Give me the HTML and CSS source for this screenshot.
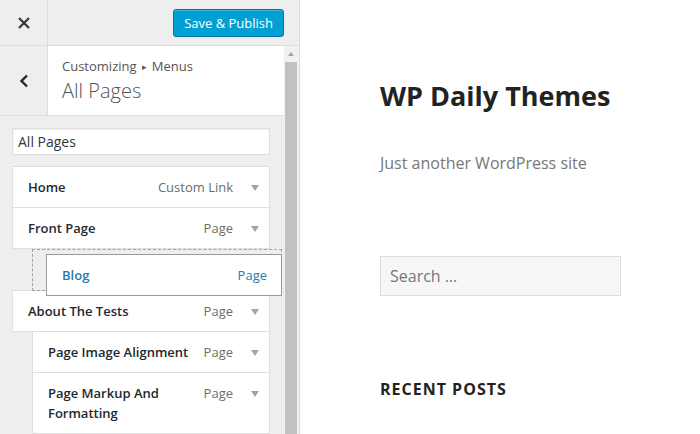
FILE: index.html
```html
<!DOCTYPE html>
<html lang="en">
<head>
    <meta charset="UTF-8">
    <title>Customize: WP Daily Themes</title>
    <link rel="stylesheet" href="styles.css">
</head>
<body>
<div class="customizer">
    <!-- Customizer sidebar -->
    <aside class="sidebar">
        <div class="sidebar-top">
            <a class="close-btn" href="#">
                <svg width="20" height="20" viewBox="0 0 20 20"><path d="M5 5 L15 15 M15 5 L5 15" stroke="#32373c" stroke-width="2.2" fill="none"/></svg>
            </a>
            <button class="publish-btn">Save &amp; Publish</button>
        </div>
        <div class="sidebar-body">
            <div class="sidebar-content">
                <div class="panel-head">
                    <a class="back-btn" href="#">
                        <svg width="20" height="20" viewBox="0 0 20 20"><path d="M13 4.5 L7.5 10 L13 15.5" stroke="#23282d" stroke-width="2.4" fill="none"/></svg>
                    </a>
                    <div class="panel-title">
                        <span class="crumb">Customizing <span class="sep">&#9656;</span> Menus</span>
                        <span class="title">All Pages</span>
                    </div>
                </div>

                <div class="menu-area">
                    <input class="menu-name" type="text" value="All Pages">
                    <ul class="menu-items">
                        <li class="menu-item">
                            <span class="item-title">Home</span>
                            <span class="item-type">Custom Link</span>
                            <span class="toggle"></span>
                        </li>
                        <li class="menu-item">
                            <span class="item-title">Front Page</span>
                            <span class="item-type">Page</span>
                            <span class="toggle"></span>
                        </li>
                        <li class="drop-placeholder">
                            <div class="menu-item dragging">
                                <span class="item-title">Blog</span>
                                <span class="item-type">Page</span>
                            </div>
                        </li>
                        <li class="menu-item after-drop">
                            <span class="item-title">About The Tests</span>
                            <span class="item-type">Page</span>
                            <span class="toggle"></span>
                        </li>
                        <li class="menu-item depth-1">
                            <span class="item-title">Page Image Alignment</span>
                            <span class="item-type">Page</span>
                            <span class="toggle"></span>
                        </li>
                        <li class="menu-item depth-1">
                            <span class="item-title">Page Markup And Formatting</span>
                            <span class="item-type">Page</span>
                            <span class="toggle"></span>
                        </li>
                    </ul>
                </div>
            </div>
            <div class="scrollbar">
                <span class="scroll-up"></span>
                <span class="scroll-thumb"></span>
            </div>
        </div>
    </aside>

    <!-- Site preview -->
    <main class="preview">
        <h1 class="site-title">WP Daily Themes</h1>
        <p class="site-desc">Just another WordPress site</p>
        <input class="search-field" type="search" placeholder="Search &hellip;">
        <h2 class="widget-title">Recent Posts</h2>
    </main>
</div>
</body>
</html>
```

FILE: styles.css
```css
/* Basic styling */
html, body {
    margin: 0;
    padding: 0;
    height: 100%;
    overflow: hidden;
}
body {
    font-family: 'Open Sans', 'Noto Sans', sans-serif;
    font-size: 13px;
    color: #444;
    background-color: #fff;
}
.customizer {
    display: flex;
    height: 100vh;
}

/* Sidebar */
.sidebar {
    width: 300px;
    flex-shrink: 0;
    box-sizing: border-box;
    border-right: 1px solid #ddd;
    background-color: #eee;
    display: flex;
    flex-direction: column;
}
.sidebar-top {
    height: 45px;
    border-bottom: 1px solid #ddd;
    display: flex;
    align-items: center;
    justify-content: space-between;
}
.close-btn {
    width: 47px;
    height: 45px;
    border-right: 1px solid #ddd;
    display: flex;
    align-items: center;
    justify-content: center;
}
.publish-btn {
    margin-right: 15px;
    margin-top: 1px;
    height: 28px;
    padding: 0 10px;
    font-family: inherit;
    font-size: 13px;
    color: #fff;
    background-color: #00a0d2;
    border: 1px solid #0073aa;
    border-radius: 3px;
    box-shadow: inset 0 1px 0 rgba(120, 200, 230, 0.5);
    cursor: pointer;
}
.sidebar-body {
    flex: 1;
    display: flex;
    overflow: hidden;
}
.sidebar-content {
    flex: 1;
    overflow: hidden;
}

/* Panel header */
.panel-head {
    display: flex;
    background-color: #fff;
    border-bottom: 1px solid #ddd;
}
.back-btn {
    width: 47px;
    flex-shrink: 0;
    border-right: 1px solid #ddd;
    background-color: #eee;
    display: flex;
    align-items: center;
    justify-content: center;
}
.panel-title {
    padding: 10px 12px 11px 14px;
    display: flex;
    flex-direction: column;
}
.crumb {
    font-size: 13px;
    line-height: 20px;
    color: #555;
}
.crumb .sep {
    font-size: 9px;
    font-family: 'DejaVu Sans', sans-serif;
    vertical-align: 1px;
    padding: 0 2px;
}
.title {
    font-size: 20px;
    font-weight: 300;
    line-height: 27px;
    color: #555;
}

/* Menu items */
.menu-area {
    padding: 12px 14px 0 12px;
}
.menu-name {
    display: block;
    width: 100%;
    box-sizing: border-box;
    height: 27px;
    margin: 0;
    padding: 0 5px;
    font-family: inherit;
    font-size: 14px;
    color: #32373c;
    background-color: #fff;
    border: 1px solid #ddd;
    box-shadow: inset 0 1px 2px rgba(0, 0, 0, 0.07);
}
.menu-items {
    list-style: none;
    margin: 11px 0 0;
    padding: 0;
}
.menu-item {
    display: flex;
    align-items: flex-start;
    background-color: #fff;
    border: 1px solid #dfdfdf;
    margin-top: -1px;
    padding: 10px 10px 10px 15px;
    line-height: 20px;
}
.menu-item:first-child {
    margin-top: 0;
}
.item-title {
    flex: 1;
    font-weight: 600;
    color: #23282d;
}
.item-type {
    margin-left: 10px;
    color: #6d6d6d;
}
.toggle {
    width: 8px;
    height: 20px;
    margin-left: 18px;
    position: relative;
}
.toggle::after {
    content: "";
    position: absolute;
    top: 8px;
    left: 0;
    border-left: 4px solid transparent;
    border-right: 4px solid transparent;
    border-top: 6px solid #a0a5aa;
}
.depth-1 {
    margin-left: 20px;
}

/* Drag placeholder */
.drop-placeholder {
    position: relative;
    height: 42px;
    box-sizing: border-box;
    border: 1px dashed #a0a5aa;
    margin-left: 20px;
    margin-right: -12px;
}
.menu-item.dragging {
    position: absolute;
    top: 4px;
    left: 13px;
    right: -1px;
    margin: 0;
    z-index: 2;
    border-color: #999;
    padding-right: 14px;
}
.dragging .item-title {
    color: #2a7ba6;
}
.dragging .item-type {
    color: #2a7ba6;
}

/* Scrollbar */
.scrollbar {
    width: 15px;
    flex-shrink: 0;
    background-color: #f1f1f1;
    display: flex;
    flex-direction: column;
}
.scroll-up {
    height: 16px;
    position: relative;
}
.scroll-up::after {
    content: "";
    position: absolute;
    top: 6px;
    left: 4px;
    border-left: 3.5px solid transparent;
    border-right: 3.5px solid transparent;
    border-bottom: 4px solid #a3a3a3;
}
.scroll-thumb {
    flex: 1;
    margin: 0 2px 0 1px;
    background-color: #c1c1c1;
}

/* Preview */
.preview {
    flex: 1;
    padding: 79px 0 0 80px;
    background-color: #fff;
}
.site-title {
    margin: 0;
    font-size: 27px;
    font-weight: 700;
    line-height: 34px;
    color: #222;
}
.site-desc {
    margin: 38px 0 0;
    font-size: 16px;
    line-height: 24px;
    color: #777;
}
.search-field {
    display: block;
    margin-top: 81px;
    width: 241px;
    height: 40px;
    box-sizing: border-box;
    padding: 0 9px;
    font-family: inherit;
    font-size: 16px;
    background-color: #f7f7f7;
    border: 1px solid #ddd;
}
.search-field::placeholder {
    color: #767676;
}
.widget-title {
    margin: 81px 0 0;
    font-size: 16px;
    font-weight: 700;
    line-height: 24px;
    letter-spacing: 1px;
    text-transform: uppercase;
    color: #222;
}
```
